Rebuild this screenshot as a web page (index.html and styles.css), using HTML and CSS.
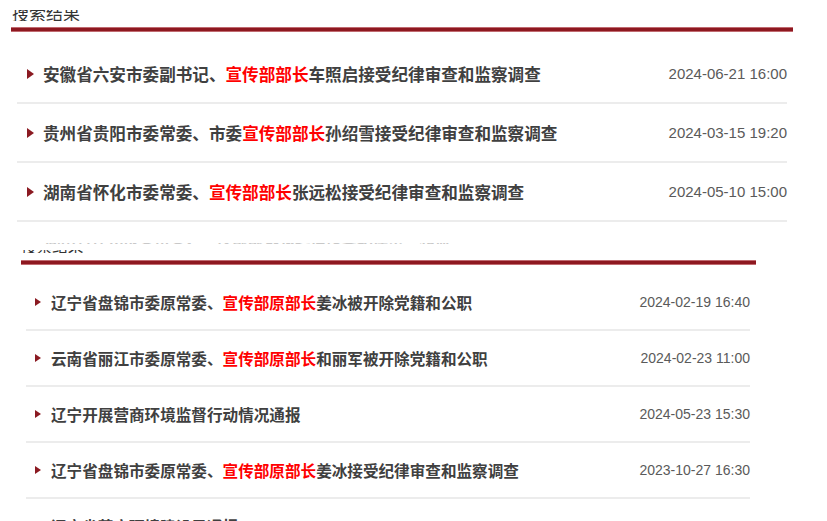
FILE: index.html
```html
<!DOCTYPE html>
<html lang="zh-CN">
<head>
<meta charset="utf-8">
<title>搜索结果</title>
<link rel="stylesheet" href="styles.css">
</head>
<body>
<section class="panel panel-top">
  <div class="title-clip"><h2 class="title">搜索结果</h2></div>
  <div class="bar"></div>
  <ul class="list">
    <li class="row"><span class="arrow"></span><a class="headline">安徽省六安市委副书记、<em>宣传部部长</em>车照启接受纪律审查和监察调查</a><span class="date">2024-06-21 16:00</span></li>
    <li class="row"><span class="arrow"></span><a class="headline">贵州省贵阳市委常委、市委<em>宣传部部长</em>孙绍雪接受纪律审查和监察调查</a><span class="date">2024-03-15 19:20</span></li>
    <li class="row"><span class="arrow"></span><a class="headline">湖南省怀化市委常委、<em>宣传部部长</em>张远松接受纪律审查和监察调查</a><span class="date">2024-05-10 15:00</span></li>
  </ul>
</section>
<section class="panel panel-bottom">
  <div class="sliver-clip"><div class="sliver">湖南省怀化市委常委、宣传部部长张远松接受纪律审查和监</div></div>
  <div class="title-sliver-clip"><div class="title-sliver">搜索结果</div></div>
  <div class="bar"></div>
  <ul class="list">
    <li class="row"><span class="arrow"></span><a class="headline">辽宁省盘锦市委原常委、<em>宣传部原部长</em>姜冰被开除党籍和公职</a><span class="date">2024-02-19 16:40</span></li>
    <li class="row"><span class="arrow"></span><a class="headline">云南省丽江市委原常委、<em>宣传部原部长</em>和丽军被开除党籍和公职</a><span class="date">2024-02-23 11:00</span></li>
    <li class="row"><span class="arrow"></span><a class="headline">辽宁开展营商环境监督行动情况通报</a><span class="date">2024-05-23 15:30</span></li>
    <li class="row"><span class="arrow"></span><a class="headline">辽宁省盘锦市委原常委、<em>宣传部原部长</em>姜冰接受纪律审查和监察调查</a><span class="date">2023-10-27 16:30</span></li>
    <li class="row"><span class="arrow"></span><a class="headline">辽宁省营商环境建设局通报</a><span class="date">2023-09-12 10:00</span></li>
  </ul>
</section>
</body>
</html>
```

FILE: styles.css
```css
html, body {
  margin: 0;
  padding: 0;
  background: #ffffff;
  overflow: hidden;
  height: 521px;
}

body {
  font-family: "Noto Sans CJK SC", "Liberation Sans", sans-serif;
  color: #404040;
}

.panel {
  display: flex;
  flex-direction: column;
}

.panel-top {
  margin-left: 11px;
  width: 782px;
}

.panel-bottom {
  margin-left: 21px;
  width: 735px;
  margin-top: 21px;
}

.title-clip {
  margin-top: 10px;
  height: 11px;
  overflow: hidden;
}

.title {
  margin: -6px 0 0 1px;
  font-size: 17px;
  line-height: 17px;
  font-weight: 400;
  color: #333333;
}

.bar {
  box-sizing: border-box;
  height: 5px;
  background: #8e1820;
  border-top: 1px solid #c06a70;
  border-bottom: 1px solid #c06a70;
}

.panel-top .bar {
  margin-top: 6px;
}

.panel-bottom .bar {
  margin-top: 7px;
}

.list {
  list-style: none;
  margin: 0;
  padding: 0;
}

.panel-top .list {
  margin: 13px 0 0 6px;
  width: 770px;
}

.panel-bottom .list {
  margin: 10px 0 0 5px;
  width: 724px;
}

.row {
  display: flex;
  align-items: center;
  box-sizing: border-box;
  border-bottom: 2px solid #ececec;
  padding-top: 0;
}

.panel-top .row {
  height: 59px;
}

.panel-bottom .row {
  height: 56px;
}

.arrow {
  flex: none;
  width: 0;
  height: 0;
  border-top: 5px solid transparent;
  border-bottom: 5px solid transparent;
  border-left: 7px solid #8b1a22;
}

.panel-top .arrow {
  margin: 0 9px 0 10px;
}

.panel-bottom .arrow {
  margin: 0 10px 0 9px;
  border-top-width: 4.5px;
  border-bottom-width: 4.5px;
  border-left-width: 6px;
}

.headline {
  flex: 1;
  font-weight: 700;
  color: #404040;
  white-space: nowrap;
}

.panel-top .headline {
  font-size: 16.6px;
}

.panel-bottom .headline {
  font-size: 15.6px;
}

.headline em {
  font-style: normal;
  color: #ff0000;
}

.date {
  flex: none;
  font-family: "Liberation Sans", Arial, sans-serif;
  color: #5a5a5a;
}

.panel-top .date {
  font-size: 15px;
}

.panel-bottom .date {
  font-size: 14px;
}

.sliver-clip {
  height: 1px;
  overflow: hidden;
  padding-left: 24px;
}

.sliver {
  margin-top: -14px;
  font-size: 15.6px;
  line-height: 16px;
  font-weight: 700;
  color: #c8c8c8;
  white-space: nowrap;
}

.title-sliver-clip {
  margin-top: 6px;
  height: 3px;
  overflow: hidden;
}

.title-sliver {
  margin-top: -13px;
  font-size: 15.6px;
  line-height: 16px;
  color: #333333;
  white-space: nowrap;
}
```
